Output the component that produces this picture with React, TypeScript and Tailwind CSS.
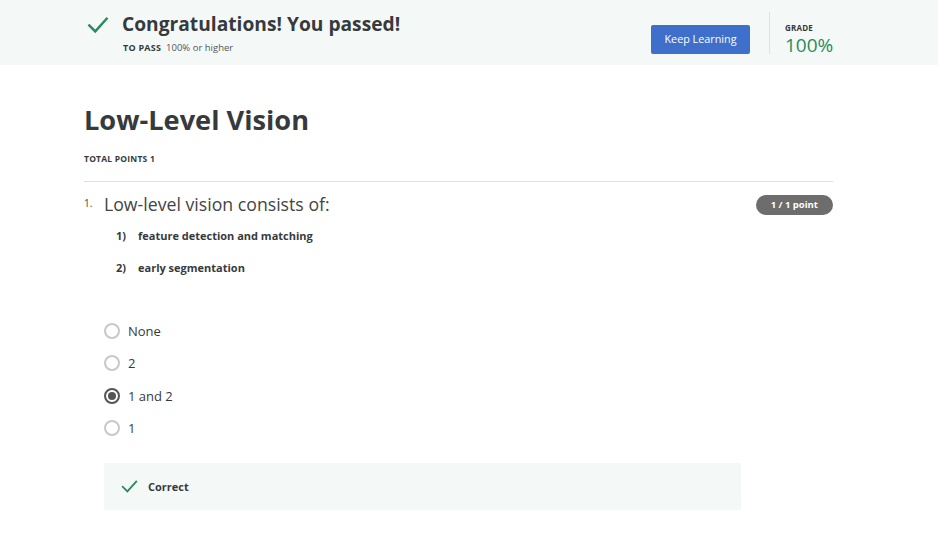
import React from 'react';

const Check: React.FC<{ className?: string }> = ({ className }) => (
  <svg viewBox="0 0 24 24" className={className} fill="none" stroke="currentColor" strokeWidth={2.6} strokeLinecap="square">
    <path d="M2.5 12.5 L9 19 L21.5 5" />
  </svg>
);

const options = [
  { label: 'None', checked: false },
  { label: '2', checked: false },
  { label: '1 and 2', checked: true },
  { label: '1', checked: false },
];

const App: React.FC = () => {
  return (
    <div className="min-h-screen bg-white text-[#373a3c]" style={{ fontFamily: '"Open Sans", "Noto Sans", Arial, sans-serif' }}>
      {/* Result banner */}
      <header className="h-[65px] bg-[#f4f9f8]">
        <div className="ml-[84px] flex h-full w-[749px] items-center">
          <div className="flex flex-1 items-start">
            <Check className="mt-[4px] ml-[3px] h-[22px] w-[22px] text-[#2a8a5c]" />
            <div className="ml-[13px]">
              <h2 className="mt-[2px] text-[19.2px] font-bold leading-[24px] text-[#373a3c]">Congratulations! You passed!</h2>
              <div className="mt-[5px] flex items-baseline gap-[5px] pl-[1px]">
                <span className="text-[9px] font-bold tracking-wide">TO PASS</span>
                <span className="text-[9.5px] text-[#555]">100% or higher</span>
              </div>
            </div>
          </div>
          <button className="mt-[14px] h-[29px] w-[99px] rounded-[2px] bg-[#3e6fcb] text-[10.8px] text-white">Keep Learning</button>
          <div className="ml-[19px] mr-[15px] h-[42px] w-px bg-[#dde3e2]" />
          <div className="flex w-[48px] flex-col pt-[14px]">
            <span className="text-[8px] font-bold tracking-wide text-[#373a3c]">GRADE</span>
            <span className="-mt-[2px] text-[19px] leading-[26px] text-[#2a8a5c]">100%</span>
          </div>
        </div>
      </header>

      <main className="ml-[84px] w-[749px] pt-[37px]">
        <h1 className="text-[27.2px] font-bold leading-[36px] text-[#373a3c]">Low-Level Vision</h1>
        <div className="mt-[15px] text-[8.5px] font-bold tracking-wide">TOTAL POINTS 1</div>
        <hr className="mt-[15px] border-[#e0e0e0]" />

        <div className="mt-[10px] flex items-start">
          <span className="mt-[4px] w-[20px] text-[10px] text-[#444]">1.</span>
          <div className="flex-1">
            <div className="flex items-start justify-between">
              <p className="text-[17.7px] leading-[24px] text-[#444]">Low-level vision consists of:</p>
              <span className="mt-[3px] rounded-full bg-[#6d6d6d] px-[15px] py-[3px] text-[9.5px] font-bold leading-[14px] text-white">1 / 1 point</span>
            </div>
            <div className="mt-[12px] ml-[12px] flex flex-col gap-[16px] text-[11px] font-bold text-[#373a3c]">
              <div className="flex leading-[16px]"><span className="w-[22px]">1)</span>feature detection and matching</div>
              <div className="flex leading-[16px]"><span className="w-[22px]">2)</span>early segmentation</div>
            </div>

            <div className="mt-[46px] flex flex-col gap-[14.5px]">
              {options.map((o) => (
                <label key={o.label} className="flex items-center gap-[8px] text-[13px] leading-[18px] text-[#373a3c]">
                  <span className={`flex h-[16px] w-[16px] items-center justify-center rounded-full border-2 ${o.checked ? 'border-[#555]' : 'border-[#c8c8c8]'}`}>
                    {o.checked && <span className="h-[8px] w-[8px] rounded-full bg-[#555]" />}
                  </span>
                  {o.label}
                </label>
              ))}
            </div>

            <div className="mt-[26px] flex h-[47px] w-[637px] items-center bg-[#f4f9f8] pl-[17px]">
              <Check className="h-[17px] w-[17px] text-[#2a8a5c]" />
              <span className="ml-[10px] text-[11px] font-bold text-[#373a3c]">Correct</span>
            </div>
          </div>
        </div>
      </main>
    </div>
  );
};

export default App;
